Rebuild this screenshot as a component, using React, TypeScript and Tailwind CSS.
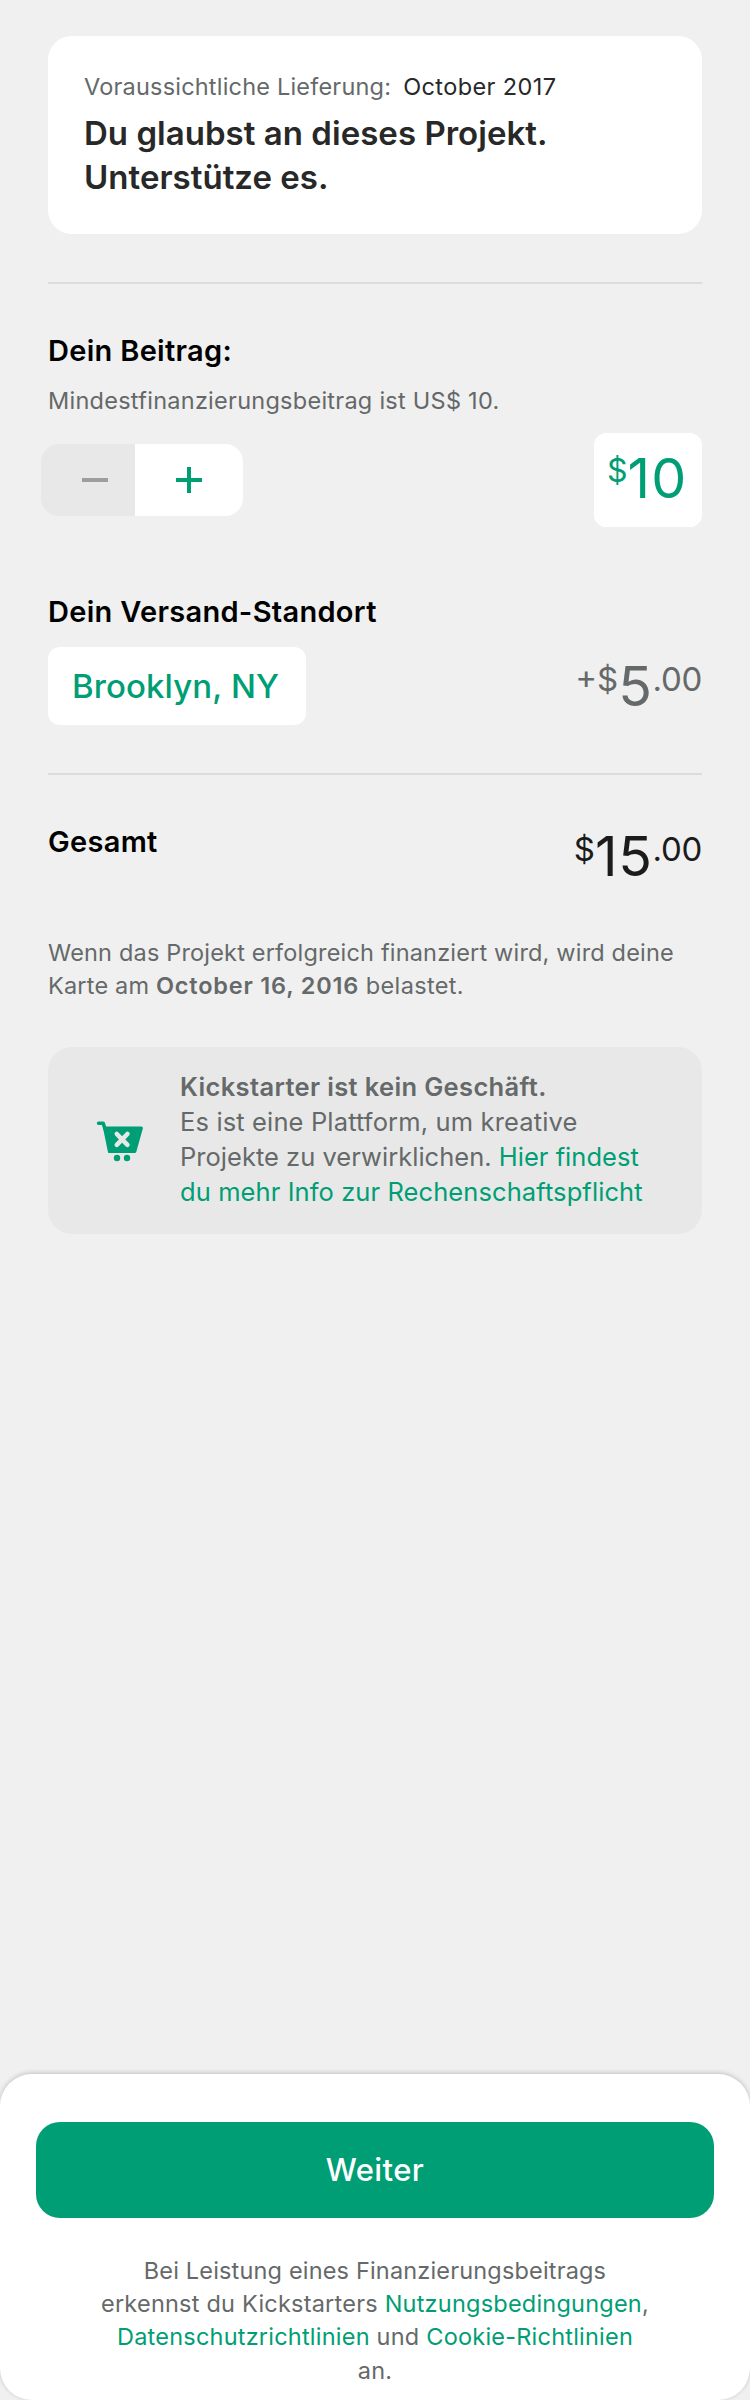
import type { ReactNode } from "react";

function Divider() {
  return <div className="h-[2px] bg-[#dcdcdc]" />;
}

function Heading({ children, className = "" }: { children: ReactNode; className?: string }) {
  return (
    <h2 className={`text-[29px] leading-[36px] font-semibold tracking-[0.3px] text-black ${className}`}>{children}</h2>
  );
}

function Price({ prefix, whole, cents, className = "" }: { prefix: string; whole: string; cents: string; className?: string }) {
  return (
    <div className={`flex items-start whitespace-nowrap ${className}`}>
      <span className="pt-px text-[33px] leading-[40px]">{prefix}</span>
      <span className="text-[55.5px] leading-[56px] tracking-[0.7px]">{whole}</span>
      <span className="pt-px text-[33px] leading-[40px] tracking-[-0.3px]">{cents}</span>
    </div>
  );
}

function CartIcon() {
  return (
    <svg width="48" height="42" viewBox="0 0 48 42" className="shrink-0">
      <path d="M2.6 3.2H7.2L9 9" fill="none" stroke="#009e74" strokeWidth="3.6" strokeLinejoin="round" strokeLinecap="round" />
      <path d="M8.6 8.1H45.4L38.8 31.6H13.4Z" fill="#009e74" stroke="#009e74" strokeWidth="3" strokeLinejoin="round" />
      <path d="M20.8 14L31.4 24.8M31.4 14L20.8 24.8" stroke="#e8e8e8" strokeWidth="4.6" strokeLinecap="round" />
      <circle cx="21" cy="38" r="3.2" fill="#009e74" />
      <circle cx="31" cy="38" r="3.2" fill="#009e74" />
    </svg>
  );
}

export default function App() {
  return (
    <div className="flex h-[2400px] w-[750px] flex-col overflow-hidden bg-[#f0f0f0] font-[Inter,sans-serif] text-[#656969]">
      <main className="flex flex-1 flex-col px-12 pt-9">
        <section className="h-[198px] rounded-[24px] bg-white px-9 pt-[36px]">
          <p className="flex gap-[12px] text-[23.5px] leading-[30px] whitespace-nowrap">
            <span className="tracking-[0.2px]">Voraussichtliche Lieferung:</span>
            <span className="tracking-[0.4px] text-[#282828]">October 2017</span>
          </p>
          <h1 className="mt-[9px] text-[33px] leading-[44px] font-semibold tracking-[0.03px] whitespace-nowrap text-[#282828]">
            Du glaubst an dieses Projekt.
            <br />
            Unterstütze es.
          </h1>
        </section>

        <div className="mt-12">
          <Divider />
        </div>

        <Heading className="mt-[49px]">Dein Beitrag:</Heading>
        <p className="mt-[17px] text-[23.5px] leading-[30px] tracking-[0.26px] whitespace-nowrap text-[#656868]">
          Mindestfinanzierungsbeitrag ist US$ 10.
        </p>

        <div className="mt-[17px] flex items-center justify-between">
          <div className="-ml-[7px] flex h-[72px] w-[202px] overflow-hidden rounded-[18px]">
            <button className="flex w-[94px] items-center bg-[#e8e8e8] pl-[41px]">
              <span className="h-[4px] w-[26px] bg-[#9b9e9e]" />
            </button>
            <button className="flex flex-1 items-center bg-white pl-[41px]">
              <svg width="26" height="26" viewBox="0 0 26 26">
                <path d="M0 13H26M13 0V26" stroke="#009e74" strokeWidth="4" />
              </svg>
            </button>
          </div>
          <div className="flex h-[94px] w-[108px] items-start rounded-[12px] bg-white pt-[17px] pl-[13px] text-[#009e74]">
            <span className="pt-px text-[32px] leading-[40px]">$</span>
            <span className="text-[55.5px] leading-[56px] tracking-[1.2px]">10</span>
          </div>
        </div>

        <Heading className="mt-[67px]">Dein Versand-Standort</Heading>
        <div className="mt-[17px] flex h-[78px] items-start justify-between">
          <button className="h-[78px] w-[258px] rounded-[12px] bg-white pl-[24px] text-left text-[33px] leading-[78px] font-[550] tracking-[0.1px] text-[#009e74]">
            Brooklyn, NY
          </button>
          <Price prefix="+$" whole="5" cents=".00" className="mt-[11px]" />
        </div>

        <div className="mt-12">
          <Divider />
        </div>

        <div className="mt-12 flex h-[66px] items-start justify-between">
          <Heading className="mt-px">Gesamt</Heading>
          <Price prefix="$" whole="15" cents=".00" className="mt-[5px] text-[#1b1b1b]" />
        </div>

        <p className="mt-[48px] text-[23.5px] leading-[32.5px] tracking-[0.18px] whitespace-nowrap">
          Wenn das Projekt erfolgreich finanziert wird, wird deine
          <br />
          Karte am <b className="font-semibold tracking-[0.8px]">October 16, 2016</b> <span className="tracking-[0.35px]">belastet.</span>
        </p>

        <section className="mt-[45px] flex h-[187px] items-center rounded-[24px] bg-[#e8e8e8] pl-12">
          <CartIcon />
          <p className="ml-[36px] pb-[3px] text-[25.5px] leading-[35px] whitespace-nowrap">
            <b className="font-semibold tracking-[0.35px]">Kickstarter ist kein Geschäft.</b>
            <br />
            <span className="tracking-[0.14px]">Es ist eine Plattform, um kreative</span>
            <br />
            <span className="tracking-[0.02px]">
              Projekte zu verwirklichen. <a className="text-[#009e74]">Hier findest</a>
            </span>
            <br />
            <a className="tracking-[0.09px] text-[#009e74]">du mehr Info zur Rechenschaftspflicht</a>
          </p>
        </section>
      </main>

      <footer className="h-[326px] rounded-[32px] bg-white px-9 pt-12 shadow-[0_-1px_5px_rgba(0,0,0,0.2)]">
        <button className="block h-24 w-full rounded-[24px] bg-[#009e74] text-center text-[31px] leading-[96px] font-[550] tracking-[0.4px] text-white">
          Weiter
        </button>
        <p className="mt-[36px] text-center text-[23.5px] leading-[33.2px] tracking-[0.22px] whitespace-nowrap">
          <span className="tracking-[0.17px]">Bei Leistung eines Finanzierungsbeitrags</span>
          <br />
          erkennst du Kickstarters <a className="text-[#009e74]">Nutzungsbedingungen</a>,
          <br />
          <a className="text-[#009e74]">Datenschutzrichtlinien</a> und <a className="text-[#009e74]">Cookie-Richtlinien</a>
          <br />
          an.
        </p>
      </footer>
    </div>
  );
}
